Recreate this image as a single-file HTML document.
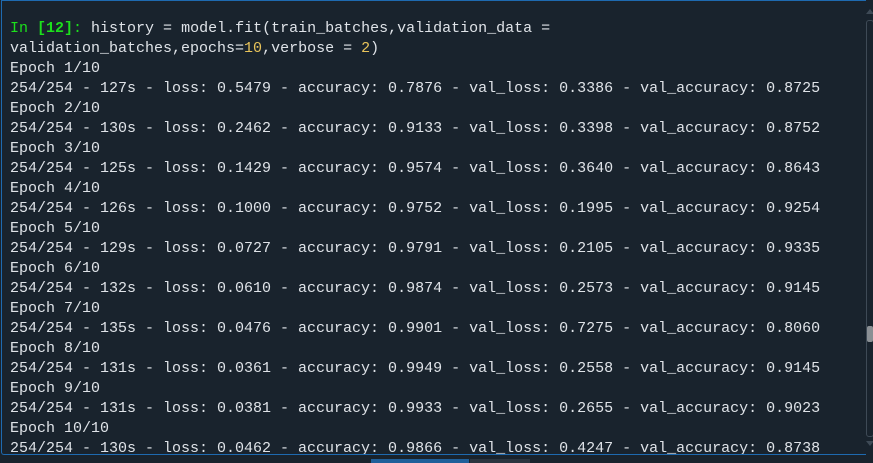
<!DOCTYPE html>
<html><head><style>
html,body{margin:0;padding:0;background:#19232d;}
body{width:873px;height:463px;position:relative;overflow:hidden;}
.box{position:absolute;left:1px;top:0;width:864px;height:453px;border:1px solid #1e6ab0;border-right:none;border-radius:0 0 0 3px;overflow:hidden;}
pre{position:absolute;left:8px;top:18px;margin:0;font-family:"Liberation Mono","DejaVu Sans Mono",monospace;font-size:15px;line-height:20px;color:#dfe3e8;white-space:pre;}
.g{color:#1ce01c}.gb{color:#1ce01c;font-weight:bold}.y{color:#e8c35a}
.sb{position:absolute;left:866px;top:20px;width:6px;height:415px;border:1px solid #3e4a56;border-radius:3px;}
.th{position:absolute;left:867px;top:326px;width:6px;height:16px;background:#8a8f94;border-radius:2px;}
.up{position:absolute;left:866px;top:9px;width:0;height:0;border-left:4px solid transparent;border-right:4px solid transparent;border-bottom:5px solid #3e4a56;}
.dn{position:absolute;left:866px;top:441px;width:0;height:0;border-left:4px solid transparent;border-right:4px solid transparent;border-top:5px solid #3e4a56;}
.hb{position:absolute;left:371px;top:459px;width:98px;height:4px;background:#1f5f9a;}
.hg{position:absolute;left:470px;top:459px;width:60px;height:4px;background:#2b3540;}
</style></head><body>
<div class="box"><pre><span class="g">In </span><span class="gb">[12]</span><span class="g">:</span> history = model.fit(train_batches,validation_data =
validation_batches,epochs=<span class="y">10</span>,verbose = <span class="y">2</span>)
Epoch 1/10
254/254 - 127s - loss: 0.5479 - accuracy: 0.7876 - val_loss: 0.3386 - val_accuracy: 0.8725
Epoch 2/10
254/254 - 130s - loss: 0.2462 - accuracy: 0.9133 - val_loss: 0.3398 - val_accuracy: 0.8752
Epoch 3/10
254/254 - 125s - loss: 0.1429 - accuracy: 0.9574 - val_loss: 0.3640 - val_accuracy: 0.8643
Epoch 4/10
254/254 - 126s - loss: 0.1000 - accuracy: 0.9752 - val_loss: 0.1995 - val_accuracy: 0.9254
Epoch 5/10
254/254 - 129s - loss: 0.0727 - accuracy: 0.9791 - val_loss: 0.2105 - val_accuracy: 0.9335
Epoch 6/10
254/254 - 132s - loss: 0.0610 - accuracy: 0.9874 - val_loss: 0.2573 - val_accuracy: 0.9145
Epoch 7/10
254/254 - 135s - loss: 0.0476 - accuracy: 0.9901 - val_loss: 0.7275 - val_accuracy: 0.8060
Epoch 8/10
254/254 - 131s - loss: 0.0361 - accuracy: 0.9949 - val_loss: 0.2558 - val_accuracy: 0.9145
Epoch 9/10
254/254 - 131s - loss: 0.0381 - accuracy: 0.9933 - val_loss: 0.2655 - val_accuracy: 0.9023
Epoch 10/10
254/254 - 130s - loss: 0.0462 - accuracy: 0.9866 - val_loss: 0.4247 - val_accuracy: 0.8738</pre></div>
<div class="up"></div><div class="sb"></div><div class="th"></div><div class="dn"></div>
<div class="hb"></div><div class="hg"></div>
</body></html>
